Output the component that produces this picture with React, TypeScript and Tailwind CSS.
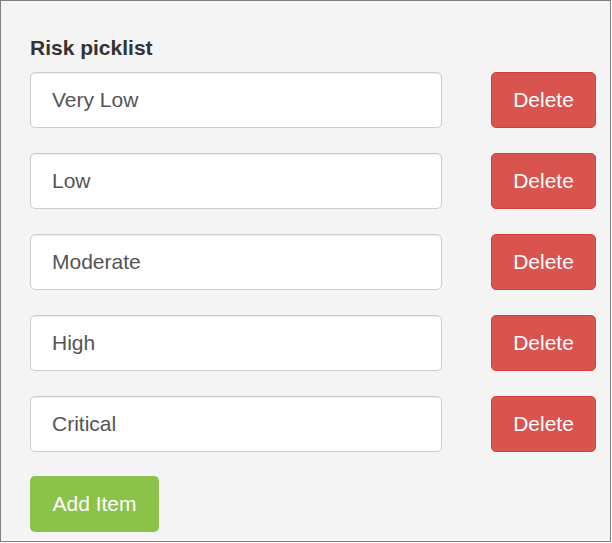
import { useState } from "react";

interface PicklistItem {
  id: number;
  label: string;
}

const INITIAL_ITEMS: PicklistItem[] = [
  { id: 1, label: "Very Low" },
  { id: 2, label: "Low" },
  { id: 3, label: "Moderate" },
  { id: 4, label: "High" },
  { id: 5, label: "Critical" },
];

export default function App() {
  const [items, setItems] = useState<PicklistItem[]>(INITIAL_ITEMS);

  const updateItem = (id: number, label: string) => {
    setItems((prev) => prev.map((item) => (item.id === id ? { ...item, label } : item)));
  };

  const removeItem = (id: number) => {
    setItems((prev) => prev.filter((item) => item.id !== id));
  };

  const addItem = () => {
    setItems((prev) => [...prev, { id: Date.now(), label: "" }]);
  };

  return (
    <div className="bg-white w-[612px] h-[543px]">
      <div
        className="w-[611px] h-[542px] border border-[#7f7f7f] bg-[#f4f4f4] pl-[29px] pr-[14px] pt-[35px] text-[21px]"
        style={{ fontFamily: '"Liberation Sans", Arial, sans-serif' }}
      >
        {/* Title */}
        <h2 className="font-bold text-[#333] leading-[24px] text-[21px]">Risk picklist</h2>

        {/* Items */}
        <div className="mt-[12px] flex flex-col gap-[25px]">
          {items.map((item) => (
            <div key={item.id} className="flex items-center justify-between">
              <input
                value={item.label}
                onChange={(e) => updateItem(item.id, e.target.value)}
                className="w-[412px] h-[56px] bg-white border border-[#cccccc] rounded-[5px] px-[21px] text-[#555] text-[21px] outline-none shadow-[inset_0_1px_1px_rgba(0,0,0,0.075)]"
              />
              <button
                onClick={() => removeItem(item.id)}
                className="w-[105px] h-[56px] pb-[2px] bg-[#d9534f] border border-[#d43f3a] rounded-[5px] text-white text-[21px] leading-none"
              >
                Delete
              </button>
            </div>
          ))}
        </div>

        {/* Add */}
        <button
          onClick={addItem}
          className="mt-[24px] w-[129px] h-[56px] pb-[2px] bg-[#8bc34a] rounded-[5px] text-white text-[21px] leading-none"
        >
          Add Item
        </button>
      </div>
    </div>
  );
}
